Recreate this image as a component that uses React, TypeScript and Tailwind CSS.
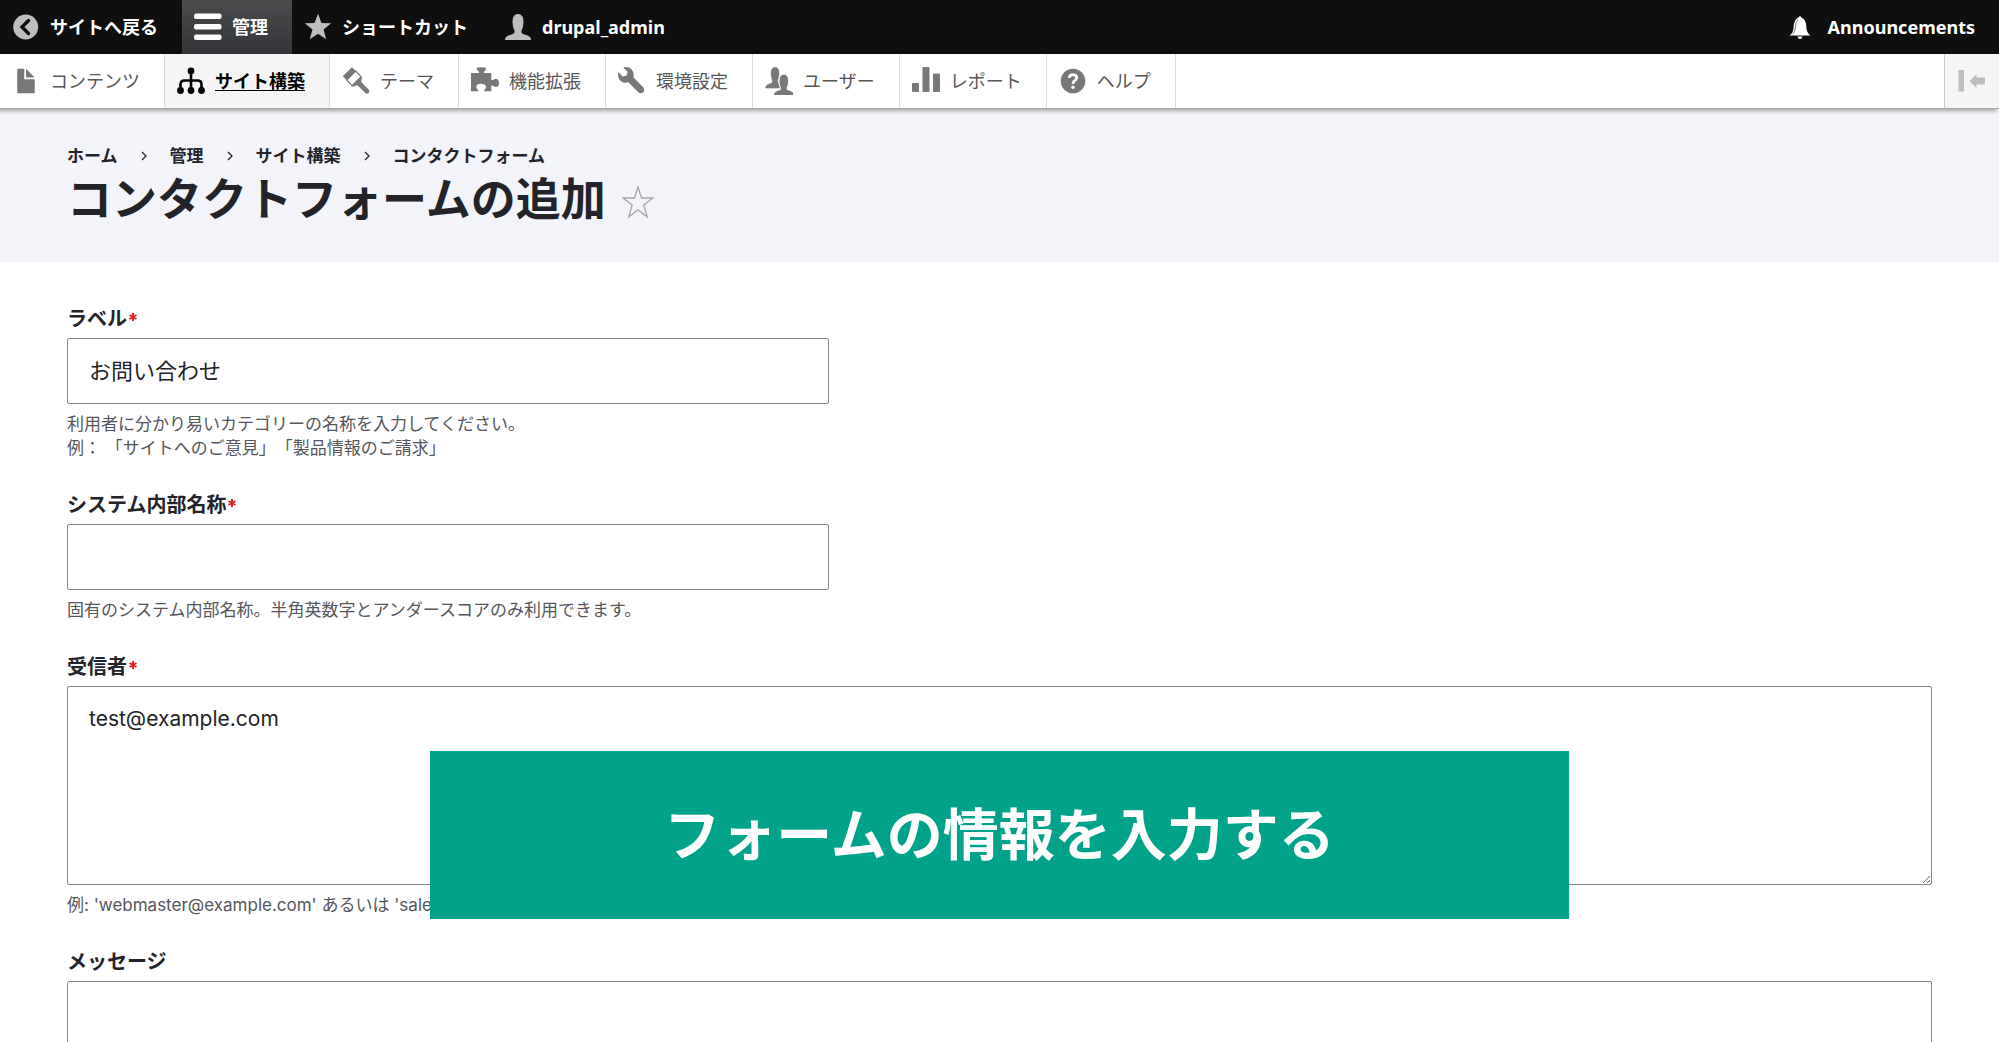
import type { ReactNode } from 'react';

type IconProps = { children: ReactNode; className?: string; box?: string };

function Icon({ children, className = '', box = '0 0 28 28' }: IconProps) {
  return (
    <svg className={`w-7 h-7 shrink-0 ${className}`} viewBox={box} fill="currentColor" aria-hidden="true">
      {children}
    </svg>
  );
}

const FileIcon = () => (
  <Icon box="0 0 16 16">
    <path d="M12.5 7h-5a.5.5 0 0 1-.5-.5v-5a.5.5 0 0 0-.5-.5h-3a.5.5 0 0 0-.5.5v13a.5.5 0 0 0 .5.5h9a.5.5 0 0 0 .5-.5v-7a.5.5 0 0 0-.5-.5z" />
    <path d="M8.5 6h4c.275 0 .34-.159.146-.354L8.354 1.354C8.159 1.159 8 1.225 8 1.5v4a.5.5 0 0 0 .5.5z" />
  </Icon>
);

const StructureIcon = () => (
  <Icon>
    <circle cx="14" cy="4" r="3.4" />
    <circle cx="3.5" cy="23.5" r="3.4" />
    <circle cx="14" cy="23.5" r="3.4" />
    <circle cx="24.5" cy="23.5" r="3.4" />
    <path d="M14 4V23M3.5 23V17.500Q3.5 13.500 7.500 13.500H20.500Q24.500 13.500 24.500 17.500V23" fill="none" stroke="currentColor" strokeWidth="2.600" />
  </Icon>
);

const BrushIcon = () => (
  <Icon box="0 0 84 84">
    <path d="M2 28L30 1L42 13L14 40Z" />
    <path d="M14 39L41 12L57 29L30 56Z" fill="none" stroke="currentColor" strokeWidth="3.500" strokeLinejoin="round" />
    <path d="M30 57L58 29Q62 33 59 37Q56 42 60 47L81 69Q84 75 79 79Q74 82 70 78L49 57Q44 52 39 57Q34 61 30 57Z" />
  </Icon>
);

const PuzzleIcon = () => (
  <Icon box="0 0 84 84">
    <path d="M0 18H24C26 13 17 10 17 5Q17 1 31 1Q45 1 45 5C45 10 37 13 38 18H61V38C66 42 68 35 75 35Q84 36 84 47Q84 60 75 60C68 60 66 53 61 57V73H40C38 66 46 66 45 59Q43 50 30 50Q17 50 16 59C15 66 23 66 22 73H0Z" />
  </Icon>
);

const WrenchIcon = () => (
  <Icon box="0 0 16 16">
    <path d="M14.416 11.586l-.01-.008v-.001l-5.656-5.656c.15-.449.252-.921.252-1.421 0-2.485-2.016-4.5-4.502-4.5-.505 0-.981.102-1.434.255l2.431 2.431-.588 2.196-2.196.588-2.445-2.445c-.162.464-.268.956-.268 1.475 0 2.486 2.014 4.5 4.5 4.5.5 0 .972-.102 1.421-.251l5.667 5.665c.781.781 2.047.781 2.828 0s.781-2.047 0-2.828z" />
  </Icon>
);

const PERSON = 'M1 27Q1 23.500 4.500 22.500L9 21Q11 20 10.500 17.500Q8.500 14 8.500 8.500Q8.500 1 14 1Q19.500 1 19.500 8.500Q19.500 14 17.500 17.500Q17 20 19 21L23.500 22.500Q27 23.500 27 27Z';

const PeopleIcon = () => (
  <Icon>
    <g transform="translate(0 -0.300) scale(0.720 0.790)">
      <path d={PERSON} stroke="currentColor" strokeWidth="0.800" />
    </g>
    <g transform="translate(8.700 7.200) scale(0.720 0.770)">
      <path d={PERSON} stroke="#fff" strokeWidth="4" paintOrder="stroke" />
      <path d={PERSON} stroke="currentColor" strokeWidth="0.800" />
    </g>
  </Icon>
);

const ChartIcon = () => (
  <Icon>
    <rect x="0" y="16" width="7" height="9" rx="1" />
    <rect x="10.500" y="0" width="7" height="25" rx="1" />
    <rect x="21" y="6.500" width="7" height="18.500" rx="1" />
  </Icon>
);

const HelpIcon = () => (
  <Icon>
    <circle cx="14" cy="14" r="12.300" />
    <path d="M10.200 10.800Q10.400 7.600 14.100 7.600Q17.800 7.800 17.700 10.800Q17.500 12.600 15.700 13.700Q14 14.700 14 17" fill="none" stroke="#fff" strokeWidth="2.800" />
    <circle cx="14" cy="20.300" r="1.700" fill="#fff" />
  </Icon>
);

const BackIcon = () => (
  <Icon className="text-[#bebebe]">
    <circle cx="13.700" cy="14" r="12.500" />
    <path d="M16.500 7.500L10 14L16.500 20.500" fill="none" stroke="#0f0f0f" strokeWidth="3.400" strokeLinecap="round" />
  </Icon>
);

const MenuIcon = () => (
  <Icon>
    <rect x="0" y="0.500" width="27.500" height="5.500" rx="2" />
    <rect x="0" y="11" width="27.500" height="5.500" rx="2" />
    <rect x="0" y="21.500" width="27.500" height="5.500" rx="2" />
  </Icon>
);

const StarIcon = () => (
  <Icon className="text-[#bebebe]">
    <path d="M14 0.500L17.400 9.900L27.200 10.300L19.500 16.400L22.200 26.300L14 20.700L5.800 26.300L8.500 16.400L0.800 10.300L10.600 9.900Z" />
  </Icon>
);

const UserIcon = () => (
  <Icon className="text-[#bebebe]">
    <path d={PERSON} />
  </Icon>
);

const barItems = [
  { label: 'サイトへ戻る', icon: <BackIcon />, active: false },
  { label: '管理', icon: <MenuIcon />, active: true },
  { label: 'ショートカット', icon: <StarIcon />, active: false },
  { label: 'drupal_admin', icon: <UserIcon />, active: false },
];

const trayItems = [
  { label: 'コンテンツ', icon: <FileIcon />, active: false },
  { label: 'サイト構築', icon: <StructureIcon />, active: true },
  { label: 'テーマ', icon: <BrushIcon />, active: false },
  { label: '機能拡張', icon: <PuzzleIcon />, active: false },
  { label: '環境設定', icon: <WrenchIcon />, active: false },
  { label: 'ユーザー', icon: <PeopleIcon />, active: false },
  { label: 'レポート', icon: <ChartIcon />, active: false },
  { label: 'ヘルプ', icon: <HelpIcon />, active: false },
];

const crumbs = ['ホーム', '管理', 'サイト構築', 'コンタクトフォーム'];

type FieldProps = {
  id: string;
  label: string;
  required?: boolean;
  help?: ReactNode;
  children: ReactNode;
};

function Field({ id, label, required, help, children }: FieldProps) {
  return (
    <div className="flex flex-col items-start">
      <label htmlFor={id} className="flex mb-1.5 text-[20px] leading-[26px] font-bold">
        {label}
        {required && (
          <svg className="w-2 h-2 mt-[7px] ml-0.5 text-[#dc2323]" viewBox="0 0 8 8" stroke="currentColor" strokeWidth="2" aria-hidden="true">
            <path d="M4 0V8M0.500 2L7.500 6M7.500 2L0.500 6" />
          </svg>
        )}
      </label>
      {children}
      {help && <p className="mt-2 text-[17px] leading-6 text-[#55565b]">{help}</p>}
    </div>
  );
}

const control = 'block border border-[#84868c] rounded-xs bg-white px-[21px] text-[#232429]';
const textInput = `${control} w-[762px] max-w-full h-[66px] pb-1 text-[22px]`;
const textArea = `${control} w-full h-[199px] py-[18px] text-[21px] leading-7 resize-y`;

export default function App() {
  return (
    <div className="h-screen overflow-hidden bg-white text-[#232429] font-[Inter,'Noto_Sans_CJK_JP',sans-serif] [text-spacing-trim:space-all]">
      {/* Toolbar */}
      <div className="relative text-[18px] font-['Noto_Sans','Noto_Sans_CJK_JP',sans-serif]">
        <nav className="flex h-[54px] bg-[#0f0f0f] text-white font-bold" aria-label="ツールバー">
          {barItems.map((item) => (
            <a
              key={item.label}
              href="#"
              className={`flex items-center gap-2.5 pl-3 pr-6 ${item.active ? 'bg-linear-to-b from-[#4b4c4e] to-[#343538]' : ''}`}
            >
              {item.icon}
              {item.label}
            </a>
          ))}
          <a href="#" className="flex items-center gap-4 ml-auto pr-6">
            <svg className="w-6 h-6" viewBox="0 0 24 24" fill="#fff" aria-hidden="true">
              <path d="M1.500 20.500Q5 18 5.500 13.500Q5.500 4.500 10.500 2.500Q12 0 13.500 2.500Q18.500 4.500 18.500 13.500Q19 18 22.500 20.500Z" />
              <path d="M9.500 21.500H14.500Q14 24 12 24Q10 24 9.500 21.500Z" />
              <path d="M4.500 19Q7.500 17 7.500 12Q7.500 7 10 4.500" fill="none" stroke="#555" strokeWidth="0.800" />
            </svg>
            Announcements
          </a>
        </nav>
        <nav className="flex h-[55px] bg-white border-b border-[#a6a6a6] shadow-[-3px_1px_4px_1px_rgba(0,0,0,0.33)]" aria-label="管理メニュー">
          {trayItems.map((item) => (
            <a
              key={item.label}
              href="#"
              className={`flex items-center gap-2.5 pl-3 pr-6 border-r border-[#dddddd] ${item.active ? 'bg-[#f5f5f5] text-black font-bold underline underline-offset-2' : 'text-[#787878]'}`}
            >
              {item.icon}
              <span className={item.active ? '' : 'text-[#565656]'}>{item.label}</span>
            </a>
          ))}
          <button type="button" aria-label="縦向き" className="flex items-center justify-center w-[55px] ml-auto bg-[#f5f5f5] border-l border-[#c8c8c8] text-[#bebebe]">
            <Icon>
              <rect x="0.500" y="3" width="5.500" height="21.500" />
              <path d="M11.500 14L18.500 7V10.500H27V17.500H18.500V21Z" />
            </Icon>
          </button>
        </nav>
      </div>

      {/* Page header */}
      <header className="h-[153px] px-[67px] pt-[35px] bg-[#f3f4f9]">
        <nav aria-label="パンくず">
          <ol className="flex text-[17px] leading-6 font-bold">
            {crumbs.map((crumb, i) => (
              <li key={crumb} className="flex items-center">
                {i > 0 && (
                  <svg className="w-2 h-2.5 mx-[22px]" viewBox="0 0 8 10" fill="none" stroke="currentColor" strokeWidth="1.300" aria-hidden="true">
                    <path d="M2 1L6 5L2 9" />
                  </svg>
                )}
                <a href="#">{crumb}</a>
              </li>
            ))}
          </ol>
        </nav>
        <div className="flex items-center gap-4">
          <h1 className="text-[45px] leading-[64px] font-bold">コンタクトフォームの追加</h1>
          <button type="button" aria-label="ショートカットに追加" className="pt-1">
            <svg className="w-8 h-[34px]" viewBox="0 0 32 34" fill="none" stroke="#a6a6a6" strokeWidth="1.300" aria-hidden="true">
              <path d="M16 2L19.600 13H31L21.800 20L25.300 32L16 24.800L6.700 32L10.200 20L1 13H12.400Z" />
            </svg>
          </button>
        </div>
      </header>

      {/* Contact form */}
      <main className="px-[67px] pt-11">
        <form className="flex flex-col gap-8">
          <Field
            id="label"
            label="ラベル"
            required
            help={
              <>
                利用者に分かり易いカテゴリーの名称を入力してください。
                <br />
                例： 「サイトへのご意見」「製品情報のご請求」
              </>
            }
          >
            <input id="label" type="text" defaultValue="お問い合わせ" className={textInput} />
          </Field>
          <Field id="machine-name" label="システム内部名称" required help="固有のシステム内部名称。半角英数字とアンダースコアのみ利用できます。">
            <input id="machine-name" type="text" className={textInput} />
          </Field>
          <Field id="recipients" label="受信者" required help="例: 'webmaster@example.com' あるいは 'sales@example.com'">
            <textarea id="recipients" defaultValue="test@example.com" className={textArea} />
          </Field>
          <Field id="message" label="メッセージ">
            <textarea id="message" className={textArea} />
          </Field>
        </form>
      </main>

      {/* Caption */}
      <div className="fixed bottom-[123px] left-1/2 -translate-x-1/2 flex items-center justify-center w-[57%] h-[168px] bg-[#00a28a]">
        <p className="text-[56px] leading-[64px] font-bold text-white whitespace-nowrap">フォームの情報を入力する</p>
      </div>
    </div>
  );
}
